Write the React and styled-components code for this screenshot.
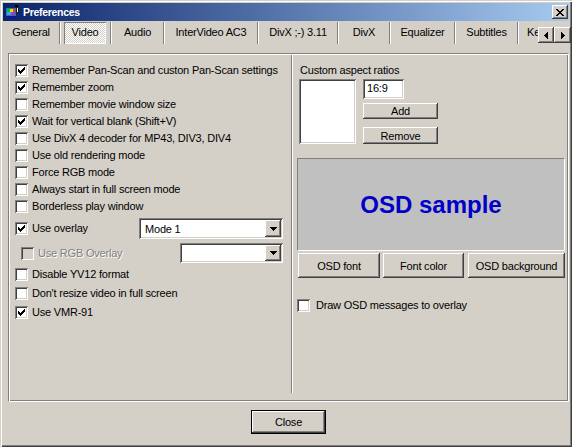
import React from 'react';
import styled, { createGlobalStyle, css } from 'styled-components';

const Global = createGlobalStyle`
  html, body { margin: 0; padding: 0; background: #d4d0c8; }
  body { font-family: "Liberation Sans", Arial, sans-serif; font-size: 11px; letter-spacing: -0.2px; color: #000; }
  * { box-sizing: border-box; }
`;

const raised = css`
  background: #d4d0c8;
  box-shadow: inset -1px -1px #404040, inset 1px 1px #fff, inset -2px -2px #808080, inset 2px 2px #d4d0c8;
`;
const sunken = css`
  box-shadow: inset 1px 1px #808080, inset -1px -1px #fff, inset 2px 2px #404040, inset -2px -2px #d4d0c8;
`;

const Window = styled.div`
  width: 572px;
  height: 447px;
  padding: 3px;
  background: #d4d0c8;
  box-shadow: inset 1px 1px #d4d0c8, inset 2px 2px #fff, inset -1px -1px #404040, inset -2px -2px #808080;
  display: flex;
  flex-direction: column;
`;

const TitleBar = styled.div`
  height: 18px;
  display: flex;
  align-items: center;
  padding: 0 1px 0 2px;
  background: linear-gradient(to right, #0a246a, #a6caf0);
  color: #fff;
  font-weight: bold;
  font-size: 10.5px;
  letter-spacing: -0.3px;
`;

const TitleText = styled.span`
  margin-left: 2px;
  line-height: 18px;
`;

const CloseBtn = styled.div`
  ${raised};
  margin-left: auto;
  width: 16px;
  height: 14px;
  display: flex;
  align-items: center;
  justify-content: center;
`;

const TabRow = styled.div`
  height: 23px;
  display: flex;
`;

const TabStrip = styled.div`
  width: 535px;
  overflow: hidden;
  display: flex;
  flex-shrink: 0;
`;

const Tab = styled.div`
  flex-shrink: 0;
  width: ${(p) => p.$w}px;
  height: 23px;
  line-height: 23px;
  text-align: ${(p) => (p.$left ? 'left' : 'center')};
  padding-left: ${(p) => (p.$left ? 8 : 0)}px;
  white-space: nowrap;
`;

const ActiveTab = styled.div`
  flex-shrink: 0;
  width: 42px;
  height: 22px;
  margin: 1px 4px 0 3px;
  line-height: 20px;
  text-align: center;
  background: repeating-conic-gradient(#fff 0 25%, #d4d0c8 0 50%) 0 0 / 2px 2px;
  box-shadow: inset 1px 1px #808080, inset -1px -1px #fff;
`;

const TabSep = styled.div`
  flex-shrink: 0;
  width: 2px;
  height: 22px;
  margin-top: 1px;
  border-left: 1px solid #808080;
  border-right: 1px solid #fff;
`;

const Arrows = styled.div`
  display: flex;
  margin-top: 6px;
`;

const ArrowBtn = styled.div`
  ${raised};
  width: ${(p) => p.$w}px;
  height: 16px;
  display: flex;
  align-items: center;
  justify-content: center;
`;

const Frame = styled.div`
  margin: 9px 0 0 5px;
  width: 561px;
  height: 349px;
  display: flex;
  border-top: 1px solid #808080;
  border-left: 1px solid #808080;
  border-right: 1px solid #fff;
  border-bottom: 1px solid #fff;
  box-shadow: inset 1px 1px #fff, inset -1px -1px #808080;
  padding: 1px;
`;

const LeftCol = styled.div`
  width: 281px;
  padding: 6.5px 8px 0 5px;
  display: flex;
  flex-direction: column;
`;

const Divider = styled.div`
  width: 2px;
  height: 338px;
  border-left: 1px solid #808080;
  border-right: 1px solid #fff;
`;

const RightCol = styled.div`
  flex: 1;
  padding: 0 0 0 4px;
  display: flex;
  flex-direction: column;
`;

const Row = styled.div`
  height: ${(p) => p.$h}px;
  display: flex;
  align-items: center;
  padding-left: ${(p) => p.$indent || 0}px;
  margin-top: ${(p) => p.$mt || 0}px;
`;

const Box = styled.div`
  ${sunken};
  width: 13px;
  height: 13px;
  flex-shrink: 0;
  background: ${(p) => (p.$disabled ? '#d4d0c8' : '#fff')};
  display: flex;
  align-items: center;
  justify-content: center;
`;

const Label = styled.span`
  margin-left: ${(p) => p.$gap || 4}px;
  white-space: nowrap;
  line-height: 13px;
  ${(p) =>
    p.$disabled &&
    css`
      color: #808080;
      text-shadow: 1px 1px #fff;
    `}
`;

const Combo = styled.div`
  ${sunken};
  margin-left: auto;
  width: ${(p) => p.$w}px;
  height: ${(p) => p.$h}px;
  background: #fff;
  display: flex;
  align-items: center;
  padding: 2px;
`;

const ComboText = styled.span`
  flex: 1;
  padding-left: 4px;
  line-height: 14px;
`;

const ComboBtn = styled.div`
  ${raised};
  width: 16px;
  height: 100%;
  display: flex;
  align-items: center;
  justify-content: center;
`;

const GroupLabel = styled.div`
  margin: 8.5px 0 0 3px;
  height: 13px;
  line-height: 13px;
`;

const AspectRow = styled.div`
  margin-top: 2.5px;
  height: 65px;
  display: flex;
`;

const ListBox = styled.div`
  ${sunken};
  background: #fff;
  margin-left: 2px;
  width: 57px;
  height: 65px;
`;

const Controls = styled.div`
  margin-left: 7px;
  display: flex;
  flex-direction: column;
`;

const TextBox = styled.div`
  ${sunken};
  background: #fff;
  width: 41px;
  height: 20px;
  padding: 3px 0 0 4px;
  line-height: 13px;
`;

const Button = styled.div`
  ${raised};
  width: ${(p) => p.$w}px;
  height: ${(p) => p.$h}px;
  margin-top: ${(p) => p.$mt || 0}px;
  margin-left: ${(p) => p.$ml || 0}px;
  display: flex;
  align-items: center;
  justify-content: center;
  white-space: nowrap;
  flex-shrink: 0;
`;

const DefaultButton = styled(Button)`
  border: 1px solid #000;
`;

const OsdBox = styled.div`
  margin-top: 14px;
  width: 268px;
  height: 93px;
  background: #c0c0c0;
  border-top: 1px solid #808080;
  border-left: 1px solid #808080;
  border-right: 1px solid #fff;
  border-bottom: 1px solid #fff;
  display: flex;
  align-items: center;
  justify-content: center;
  color: #0000c8;
  font-weight: bold;
  font-size: 24px;
  letter-spacing: 0;
  font-family: "Liberation Sans", Arial, sans-serif;
`;

const ButtonRow = styled.div`
  margin-top: 2px;
  display: flex;
`;

const Footer = styled.div`
  margin-top: 8px;
  padding-left: 248px;
  display: flex;
`;

const CHECK = [
  '......X',
  '.....XX',
  'X...XXX',
  'XX.XXX.',
  'XXXXX..',
  '.XXX...',
  '..X....',
];

const CheckMark = () => (
  <svg width="7" height="7" viewBox="0 0 7 7" shapeRendering="crispEdges">
    {CHECK.flatMap((r, y) =>
      r.split('').map((c, x) => (c === 'X' ? <rect key={`${x}-${y}`} x={x} y={y} width="1" height="1" fill="#000" /> : null))
    )}
  </svg>
);

const Check = ({ checked, label, disabled, gap, indent, h, mt, children }) => (
  <Row $h={h} $indent={indent} $mt={mt}>
    <Box $disabled={disabled}>{checked && <CheckMark />}</Box>
    <Label $disabled={disabled} $gap={gap}>{label}</Label>
    {children}
  </Row>
);

const DownTri = () => (
  <svg width="7" height="4" viewBox="0 0 7 4" shapeRendering="crispEdges">
    <path d="M0 0h7v1H0zM1 1h5v1H1zM2 2h3v1H2zM3 3h1v1H3z" fill="#000" />
  </svg>
);

const LeftTri = () => (
  <svg width="4" height="7" viewBox="0 0 4 7" shapeRendering="crispEdges">
    <path d="M3 0h1v7H3zM2 1h1v5H2zM1 2h1v3H1zM0 3h1v1H0z" fill="#000" />
  </svg>
);

const RightTri = () => (
  <svg width="4" height="7" viewBox="0 0 4 7" shapeRendering="crispEdges">
    <path d="M0 0h1v7H0zM1 1h1v5H1zM2 2h1v3H2zM3 3h1v1H3z" fill="#000" />
  </svg>
);

const AppIcon = () => (
  <svg width="16" height="16" viewBox="0 0 16 16" shapeRendering="crispEdges">
    <rect x="1" y="4" width="10" height="8" fill="#3a6ea5" />
    <rect x="2" y="5" width="3" height="3" fill="#00c040" />
    <rect x="5" y="5" width="3" height="3" fill="#f0e000" />
    <rect x="8" y="5" width="2" height="3" fill="#e04040" />
    <rect x="2" y="8" width="4" height="3" fill="#40a0ff" />
    <rect x="6" y="8" width="4" height="3" fill="#a040c0" />
    <rect x="10" y="1" width="3" height="2" fill="#000" />
    <rect x="11" y="3" width="3" height="6" fill="#202020" />
    <rect x="12" y="4" width="1" height="4" fill="#fff" />
    <rect x="3" y="12" width="8" height="2" fill="#1010a0" />
  </svg>
);

const XGlyph = () => (
  <svg width="8" height="7" viewBox="0 0 8 7" shapeRendering="crispEdges">
    <path d="M0 0h2v1h1v1h2V1h1V0h2v1H7v1H6v1H5v1h1v1h1v1h1v1H6V6H5V5H3v1H2v1H0V6h1V5h1V4h1V3H2V2H1V1H0z" fill="#000" />
  </svg>
);

const tabs = [
  { t: 'General', w: 56 },
  { t: 'Video', active: true },
  { t: 'Audio', w: 51 },
  { t: 'InterVideo AC3', w: 92 },
  { t: 'DivX ;-) 3.11', w: 78 },
  { t: 'DivX', w: 50 },
  { t: 'Equalizer', w: 63 },
  { t: 'Subtitles', w: 61 },
  { t: 'Keyboard', w: 70, left: true },
];

export default function App() {
  return (
    <>
      <Global />
      <Window>
        <TitleBar>
          <AppIcon />
          <TitleText>Preferences</TitleText>
          <CloseBtn>
            <XGlyph />
          </CloseBtn>
        </TitleBar>
        <TabRow>
          <TabStrip>
            {tabs.map((tab, i) => (
              <React.Fragment key={tab.t}>
                {i > 0 && <TabSep />}
                {tab.active ? (
                  <ActiveTab>{tab.t}</ActiveTab>
                ) : (
                  <Tab $w={tab.w} $left={tab.left}>{tab.t}</Tab>
                )}
              </React.Fragment>
            ))}
          </TabStrip>
          <Arrows>
            <ArrowBtn $w={16}>
              <LeftTri />
            </ArrowBtn>
            <ArrowBtn $w={17}>
              <RightTri />
            </ArrowBtn>
          </Arrows>
        </TabRow>
        <Frame>
          <LeftCol>
            <Check h={17.1} checked label="Remember Pan-Scan and custon Pan-Scan settings" />
            <Check h={17.1} checked label="Remember zoom" />
            <Check h={17.1} label="Remember movie window size" />
            <Check h={17.1} checked label="Wait for vertical blank (Shift+V)" />
            <Check h={17.1} label="Use DivX 4 decoder for MP43, DIV3, DIV4" />
            <Check h={17.1} label="Use old rendering mode" />
            <Check h={17.1} label="Force RGB mode" />
            <Check h={17.1} label="Always start in full screen mode" />
            <Check h={17.1} label="Borderless play window" />
            <Check h={27.3} checked label="Use overlay">
              <Combo $w={144} $h={21}>
                <ComboText>Mode 1</ComboText>
                <ComboBtn>
                  <DownTri />
                </ComboBtn>
              </Combo>
            </Check>
            <Check h={21.7} indent={6} disabled label="Use RGB Overlay">
              <Combo $w={103} $h={20}>
                <ComboText />
                <ComboBtn>
                  <DownTri />
                </ComboBtn>
              </Combo>
            </Check>
            <Check h={21.3} label="Disable YV12 format" />
            <Check h={16.7} label="Don't resize video in full screen" />
            <Check h={21.3} checked label="Use VMR-91" />
          </LeftCol>
          <Divider />
          <RightCol>
            <GroupLabel>Custom aspect ratios</GroupLabel>
            <AspectRow>
              <ListBox />
              <Controls>
                <TextBox>16:9</TextBox>
                <Button $w={75} $h={16} $mt={4}>Add</Button>
                <Button $w={75} $h={17} $mt={8}>Remove</Button>
              </Controls>
            </AspectRow>
            <OsdBox>OSD sample</OsdBox>
            <ButtonRow>
              <Button $w={82} $h={25} $ml={1}>OSD font</Button>
              <Button $w={81} $h={25} $ml={3}>Font color</Button>
              <Button $w={97} $h={25} $ml={4}>OSD background</Button>
            </ButtonRow>
            <Check h={13} mt={21} gap={6} label="Draw OSD messages to overlay" />
          </RightCol>
        </Frame>
        <Footer>
          <DefaultButton $w={75} $h={24}>Close</DefaultButton>
        </Footer>
      </Window>
    </>
  );
}
